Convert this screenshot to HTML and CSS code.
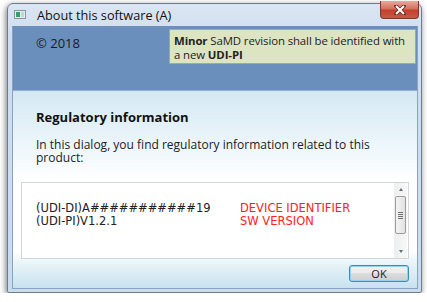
FILE: index.html
```html
<!DOCTYPE html>
<html lang="en">
<head>
    <meta charset="UTF-8">
    <title>About this software (A)</title>
    <link rel="stylesheet" href="styles.css">
</head>
<body>
    <div class="window">
        <div class="titlebar">
            <span class="app-icon">
                <svg width="12" height="9" viewBox="0 0 12 9">
                    <rect x="0.5" y="0.5" width="11" height="8" fill="#e8ecef" stroke="#8a949c"/>
                    <rect x="2" y="2" width="4" height="5" fill="#3f9a6a"/>
                    <rect x="7" y="2" width="3" height="5" fill="#c9d1d6"/>
                </svg>
            </span>
            <span class="title">About this software (A)</span>
            <button class="close-btn">
                <svg width="12" height="10" viewBox="0 0 12 10">
                    <path d="M2 1 L10 9 M10 1 L2 9" stroke="#5a2a22" stroke-width="3.6" stroke-linecap="round"/>
                    <path d="M2 1 L10 9 M10 1 L2 9" stroke="#ffffff" stroke-width="2"/>
                </svg>
            </button>
        </div>

        <div class="client">
            <div class="header">
                <div class="copyright">© 2018</div>
                <div class="note"><b>Minor</b> SaMD revision shall be identified with<br>a new <b>UDI-PI</b></div>
            </div>

            <div class="content">
                <h1>Regulatory information</h1>
                <p class="intro">In this dialog, you find regulatory information related to this product:</p>

                <div class="info-box">
                    <div class="info-text">
                        <div class="info-row">
                            <span class="code">(UDI-DI)A###########19</span>
                            <span class="label">DEVICE IDENTIFIER</span>
                        </div>
                        <div class="info-row">
                            <span class="code">(UDI-PI)V1.2.1</span>
                            <span class="label">SW VERSION</span>
                        </div>
                    </div>
                    <div class="scrollbar">
                        <span class="arrow up"></span>
                        <span class="thumb">
                            <span class="grip"></span>
                        </span>
                        <span class="arrow down"></span>
                    </div>
                </div>

                <div class="actions">
                    <button class="ok-button">OK</button>
                </div>
            </div>
        </div>
    </div>
</body>
</html>
```

FILE: styles.css
```css
* {
    margin: 0;
    padding: 0;
    box-sizing: border-box;
}

body {
    background-color: #ffffff;
    font-family: "Open Sans", "Noto Sans", sans-serif;
    color: #1e1e1e;
    padding: 3px 0 0 7px;
}

.window {
    width: 415px;
    height: 290px;
    border: 1px solid #6d7c8e;
    border-radius: 6px 6px 2px 2px;
    background: linear-gradient(#dbe6f3, #cfdeef 30px, #c8dcee);
    padding: 0 3px 3px 4px;
    box-shadow: -1px 2px 6px rgba(0,0,0,0.55);
    display: flex;
    flex-direction: column;
}

.titlebar {
    height: 22px;
    display: flex;
    align-items: center;
    padding-left: 2px;
}

.app-icon {
    display: flex;
    width: 12px;
    margin-top: -2px;
}

.title {
    font-size: 12.7px;
    margin-left: 11px;
    color: #111;
}

.close-btn {
    margin-left: auto;
    margin-right: -1px;
    align-self: flex-start;
    margin-top: -3px;
    width: 39px;
    height: 18px;
    border: 1px solid #7b3a30;
    border-top: none;
    border-radius: 0 0 4px 4px;
    background: linear-gradient(#e8a99c, #d5705e 45%, #c2402c 55%, #c85a44);
    display: flex;
    align-items: center;
    justify-content: center;
}

.client {
    flex: 1;
    display: flex;
    flex-direction: column;
    border: 1px solid #8aa2c0;
    border-top-color: #6f8fb8;
}

.header {
    height: 64px;
    background-color: #6b8fbd;
    border-bottom: 1px solid #8fb0d4;
    display: flex;
    justify-content: space-between;
    align-items: flex-start;
    padding: 2px 1px 0 23px;
}

.copyright {
    font-size: 13px;
    padding-top: 5px;
    color: #1a1a1a;
}

.note {
    width: 247px;
    background-color: #dde4c2;
    border: 1px solid #90a9cb;
    font-size: 11.4px;
    line-height: 13.5px;
    letter-spacing: -0.1px;
    padding: 4px 4px 2px 4px;
    color: #222;
    white-space: nowrap;
}

.note b {
    font-weight: 700;
}

.content {
    flex: 1;
    background: linear-gradient(#d4e8f3, #f4fafd 70px, #ffffff 90px, #ffffff 160px, #e9f4f9 172px, #c8e2ee);
    padding: 19px 8px 6px 8px;
    display: flex;
    flex-direction: column;
}

h1 {
    font-size: 13px;
    line-height: 15px;
    font-weight: 700;
    padding-left: 15px;
    color: #111;
}

.intro {
    font-size: 12px;
    line-height: 13px;
    margin-top: 13px;
    padding-left: 15px;
    padding-right: 20px;
    color: #222;
}

.info-box {
    margin-top: 18px;
    height: 77px;
    background-color: #ffffff;
    border: 1px solid #d2d6da;
    display: flex;
}

.info-text {
    flex: 1;
    padding: 19px 0 0 14px;
    font-family: "DejaVu Sans", sans-serif;
    font-size: 11.5px;
    line-height: 13px;
}

.info-row {
    display: flex;
}

.code {
    width: 204px;
    color: #222;
}

.label {
    color: #ff2222;
}

.scrollbar {
    width: 13px;
    margin: 0 1px;
    background: linear-gradient(90deg, #eceeef, #f7f7f7);
    display: flex;
    flex-direction: column;
    align-items: center;
    padding: 5px 0;
}

.arrow {
    width: 0;
    height: 0;
    border-left: 2.5px solid transparent;
    border-right: 2.5px solid transparent;
}

.arrow.up {
    border-bottom: 3px solid #6b6b6b;
}

.arrow.down {
    border-top: 3px solid #6b6b6b;
    margin-top: auto;
}

.thumb {
    margin-top: 5px;
    width: 11px;
    height: 38px;
    border: 1px solid #9c9c9c;
    border-radius: 2px;
    background: linear-gradient(90deg, #f4f4f4, #e2e2e2);
    display: flex;
    align-items: center;
    justify-content: center;
}

.grip {
    width: 5px;
    height: 7px;
    background: repeating-linear-gradient(#707070 0, #707070 1px, transparent 1px, transparent 2px);
}

.actions {
    margin-top: 6px;
    display: flex;
    justify-content: flex-end;
}

.ok-button {
    width: 60px;
    height: 17px;
    border: 1px solid #3c8ab8;
    border-radius: 3px;
    background: linear-gradient(#f2f2f2, #eaeaea 50%, #dcdcdc 50%, #cfcfcf);
    box-shadow: inset 0 0 0 1px #94d3f0;
    font-family: "Open Sans", "Noto Sans", sans-serif;
    font-size: 11px;
    color: #1a1a1a;
    line-height: 14px;
}
```
